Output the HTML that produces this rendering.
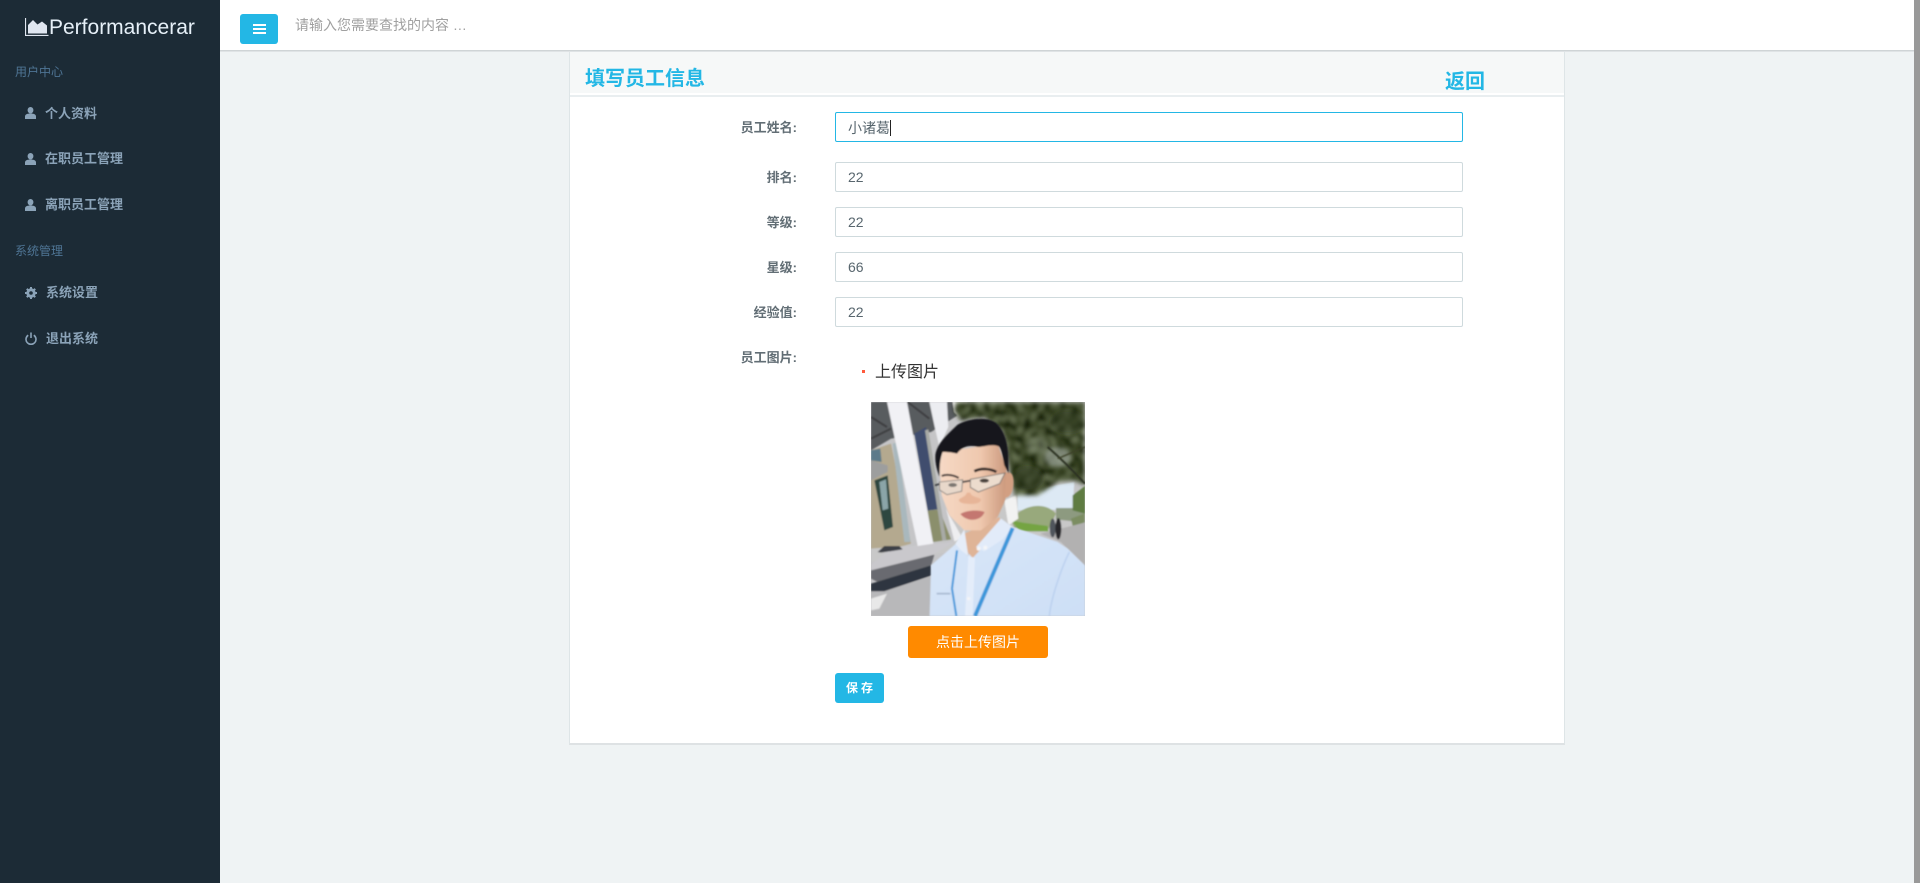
<!DOCTYPE html>
<html lang="zh">
<head>
<meta charset="utf-8">
<title>填写员工信息</title>
<style>
*{box-sizing:border-box;margin:0;padding:0}
html,body{width:1920px;height:883px;overflow:hidden;background:#eff3f4;font-family:"Liberation Sans","Noto Sans CJK SC",sans-serif}
.a{position:absolute;white-space:nowrap}
#side{left:0;top:0;width:220px;height:883px;background:#1c2b36}
#brand{left:49px;top:13px;width:146px;height:30px;line-height:29px;font-size:21px;color:#e6f0f8;overflow:hidden}
.sec{left:15px;font-size:12px;line-height:16px;color:#4f7595}
.it{font-size:13px;line-height:18px;font-weight:700;color:#8ba3b8}
#top{left:220px;top:0;width:1694px;height:51px;background:#fff;border-bottom:1px solid #cfd4d6}
#shadow{left:220px;top:51px;width:1694px;height:1px;background:#dfe3e5}
#menu{left:240px;top:14px;width:38px;height:30px;background:#23b7e5;border-radius:3px}
#menu i{position:absolute;left:13px;width:13px;height:2px;background:#fff}
#ph{left:295px;top:16px;font-size:14px;line-height:18px;color:#a0a0a0}
#card{left:569px;top:52px;width:996px;height:693px;background:#fff;border:1px solid #dee5e7;border-top:0;border-bottom:2px solid #dee2e4}
#band{left:570px;top:52px;width:994px;height:41px;background:#f6f8f8}
#line{left:570px;top:95px;width:994px;height:2px;background:#e9eef0}
.h{font-size:20px;line-height:28px;font-weight:700;color:#23b7e5}
.l{width:200px;left:597px;text-align:right;font-size:13px;line-height:18px;font-weight:700;color:#626e75}
.f{left:835px;width:628px;height:30px;border:1px solid #cfdadd;border-radius:2px;background:#fff;padding-left:12px;font-size:14px;line-height:29px;color:#58666e}
.f.on{border-color:#23b7e5;line-height:30px}
#caret{left:890px;top:120px;width:1px;height:16px;background:#222}
#dot{left:862px;top:370px;width:3px;height:3px;background:#ff5a3c}
#up{left:875px;top:361px;font-size:16px;line-height:23px;color:#333}
#upb{left:908px;top:626px;width:140px;height:32px;background:#ff8a00;border-radius:3px;color:#fff;font-size:14px;line-height:33px;text-align:center}
#save{left:835px;top:673px;width:49px;height:30px;background:#23b7e5;border-radius:3px;color:#fff;font-size:12px;font-weight:700;line-height:30px;text-align:center;letter-spacing:3px;padding-left:3px}
#scroll{left:1914px;top:0;width:6px;height:883px;background:#999}
</style>
</head>
<body>
<div class="a" id="side"></div>
<svg class="a" style="left:25px;top:18px" width="24" height="18" viewBox="0 0 24 18">
<path d="M0.500 0V17.500H23.500" fill="none" stroke="#dfe6f0" stroke-width="1.200"/>
<path d="M3 15.500V7L8 2L12.500 6.500L17 3.500L22 7.500V15.500Z" fill="#dfe6f0"/>
</svg>
<div class="a" id="brand">Performancerar</div>

<div class="a sec" style="top:64px">用户中心</div>
<svg class="a" style="left:25px;top:107px" width="11" height="12" viewBox="0 0 11 12"><ellipse cx="5.500" cy="3.200" rx="2.900" ry="3.200" fill="#8ba3b8"/><path d="M0 12V9.500C0 7.500 2 6.500 5.500 6.500S11 7.500 11 9.500V12Z" fill="#8ba3b8"/></svg>
<div class="a it" style="left:45px;top:105px">个人资料</div>
<svg class="a" style="left:25px;top:153px" width="11" height="12" viewBox="0 0 11 12"><ellipse cx="5.500" cy="3.200" rx="2.900" ry="3.200" fill="#8ba3b8"/><path d="M0 12V9.500C0 7.500 2 6.500 5.500 6.500S11 7.500 11 9.500V12Z" fill="#8ba3b8"/></svg>
<div class="a it" style="left:45px;top:150px">在职员工管理</div>
<svg class="a" style="left:25px;top:199px" width="11" height="12" viewBox="0 0 11 12"><ellipse cx="5.500" cy="3.200" rx="2.900" ry="3.200" fill="#8ba3b8"/><path d="M0 12V9.500C0 7.500 2 6.500 5.500 6.500S11 7.500 11 9.500V12Z" fill="#8ba3b8"/></svg>
<div class="a it" style="left:45px;top:196px">离职员工管理</div>

<div class="a sec" style="top:243px">系统管理</div>
<svg class="a" style="left:25px;top:287px" width="12" height="12" viewBox="0 0 12 12"><circle cx="6" cy="6" r="3.400" fill="none" stroke="#8ba3b8" stroke-width="2.600"/><path d="M6 0V12M0 6H12M1.800 1.800L10.200 10.200M10.200 1.800L1.800 10.200" stroke="#8ba3b8" stroke-width="2"/><circle cx="6" cy="6" r="1.800" fill="#1c2b36"/></svg>
<div class="a it" style="left:46px;top:284px">系统设置</div>
<svg class="a" style="left:25px;top:332px" width="12" height="13" viewBox="0 0 12 13"><path d="M3.200 3.200A5 5 0 1 0 8.800 3.200" fill="none" stroke="#8ba3b8" stroke-width="1.600"/><path d="M6 0.500V6" stroke="#8ba3b8" stroke-width="1.600"/></svg>
<div class="a it" style="left:46px;top:330px">退出系统</div>

<div class="a" id="top"></div>
<div class="a" id="shadow"></div>
<div class="a" id="menu"><i style="top:10px"></i><i style="top:14px"></i><i style="top:18px"></i></div>
<div class="a" id="ph">请输入您需要查找的内容 …</div>

<div class="a" id="card"></div>
<div class="a" id="band"></div>
<div class="a" id="line"></div>
<div class="a h" style="left:585px;top:65px">填写员工信息</div>
<div class="a h" style="left:1445px;top:68px">返回</div>

<div class="a l" style="top:119px">员工姓名:</div>
<div class="a f on" style="top:112px">小诸葛</div>
<div class="a" id="caret"></div>
<div class="a l" style="top:169px">排名:</div>
<div class="a f" style="top:162px">22</div>
<div class="a l" style="top:214px">等级:</div>
<div class="a f" style="top:207px">22</div>
<div class="a l" style="top:259px">星级:</div>
<div class="a f" style="top:252px">66</div>
<div class="a l" style="top:304px">经验值:</div>
<div class="a f" style="top:297px">22</div>
<div class="a l" style="top:349px">员工图片:</div>

<div class="a" id="dot"></div>
<div class="a" id="up">上传图片</div>

<svg class="a" style="left:871px;top:402px" width="214" height="214" viewBox="0 0 642 642">
<defs>
<filter id="b" x="-5%" y="-5%" width="110%" height="110%"><feGaussianBlur stdDeviation="2.500"/></filter>
<filter id="e" x="-5%" y="-5%" width="110%" height="110%"><feGaussianBlur stdDeviation="6"/></filter>
<filter id="fol" x="0" y="0" width="100%" height="100%" color-interpolation-filters="sRGB">
<feTurbulence type="fractalNoise" baseFrequency="0.05" numOctaves="3" seed="7"/>
<feColorMatrix type="matrix" values="0.900 0 0 0 -0.220  0.900 0 0 0 -0.175  0.900 0 0 0 -0.300  0 0 0 0 1"/>
<feGaussianBlur stdDeviation="2"/>
</filter>
<clipPath id="tc"><path d="M255 0H642V250L610 235L560 240L500 280L430 280L415 200L395 90L340 45L270 55L250 25Z"/></clipPath>
<linearGradient id="sh" x1="0" y1="0" x2="1" y2="1"><stop offset="0" stop-color="#d9e6f8"/><stop offset="1" stop-color="#cddff6"/></linearGradient>
<linearGradient id="fc" x1="0" y1="0" x2="1" y2="0"><stop offset="0" stop-color="#f6d9c5"/><stop offset="0.6" stop-color="#efc8ae"/><stop offset="1" stop-color="#c9967a"/></linearGradient>
</defs>
<rect width="642" height="642" fill="#c5c5c7"/>
<g filter="url(#b)">
<path d="M0 0H260V40L180 90L60 110L0 145Z" fill="#585b5e"/>
<path d="M0 45L48 75M0 110L60 80M110 0L175 50" stroke="#3c3e41" stroke-width="6" fill="none"/>
<path d="M0 145L30 135L60 125L120 425L85 435L0 440Z" fill="#b4a98f"/>
<path d="M0 145L28 140L32 180L0 175Z" fill="#5c7a8a"/>
<path d="M65 125L80 120L118 420L100 420Z" fill="#a9b8bd"/>
<path d="M0 175L50 190L50 210L0 235Z" fill="#9d9e9e"/>
<path d="M10 235L50 220L66 375L40 385Z" fill="#2d4640"/>
<path d="M25 240L45 232L52 320L35 325Z" fill="#8ba5a8"/>
<path d="M130 95L165 75L200 322L170 326Z" fill="#3f4e6e"/>
<path d="M170 326L205 322L240 412L185 420Z" fill="#8b8f6c"/>
<path d="M0 440L130 430L250 420V280L642 280V365L510 400L400 430L0 480Z" fill="#c8c8c8"/>
<path d="M440 270L610 240L605 322L440 325Z" fill="#dde9f4"/>
<path d="M555 318H642V362L555 352Z" fill="#8d9a80"/>
<path d="M605 280L642 252V335L605 325Z" fill="#5f7b42"/>
<path d="M420 355C450 310 520 295 555 335L532 382L430 378Z" fill="#98a97b"/>
<path d="M422 355L455 362L530 372L532 388L445 388Z" fill="#75a443"/>
<path d="M600 350L640 335V362L605 372Z" fill="#7c8d62"/>
<path d="M508 395L642 362V495L570 420Z" fill="#b2b1b1"/>
<path d="M0 488L60 438L250 420L190 456L0 512Z" fill="#c9c8cc"/>
<path d="M0 505L190 458L180 492L20 540L0 530Z" fill="#696b6f"/>
<path d="M0 545L180 490L183 520L40 568L0 568Z" fill="#2e3640"/>
<path d="M0 568L40 568L183 522L176 642H0Z" fill="#b8b8ba"/>
<path d="M0 590L48 575L25 620L0 625Z" fill="#e8e8e8"/>
<path d="M20 450L40 432L85 432L95 442L30 452Z" fill="#3c4046"/>
<path d="M48 0H108L187 425L140 432Z" fill="#f1f1f5"/>
<path d="M175 0H228L232 75L205 135L190 70Z" fill="#ecedf1"/>
<path d="M225 320L275 410L250 418Z" fill="#eeeef0"/>
<path d="M162 85L172 82L226 415L214 416Z" fill="#a8aaa6"/>
<path d="M245 0H290L270 50L250 30Z" fill="#f3f3f3"/>
<path d="M400 295L435 280L442 350L412 370Z" fill="#f2f2f2"/>
<ellipse cx="545" cy="378" rx="9" ry="28" fill="#50545c"/>
<ellipse cx="562" cy="380" rx="9" ry="32" fill="#25272c"/>
</g>
<g filter="url(#e)"><g clip-path="url(#tc)"><rect width="642" height="290" filter="url(#fol)"/></g></g>
<g filter="url(#e)">
<ellipse cx="590" cy="60" rx="50" ry="35" fill="#2e3a22" fill-opacity=".55"/>
<ellipse cx="470" cy="230" rx="45" ry="35" fill="#2c3620" fill-opacity=".6"/>
<ellipse cx="560" cy="165" rx="40" ry="30" fill="#aeb6ae" fill-opacity=".6"/>
<ellipse cx="500" cy="130" rx="35" ry="25" fill="#8b957d" fill-opacity=".5"/>
</g>
<g filter="url(#b)">
<path d="M530 135C570 170 610 210 642 245" stroke="#2c3020" stroke-width="6" fill="none"/>
<path d="M560 170L642 135" stroke="#3a3f28" stroke-width="4" fill="none"/>
<path d="M176 642L180 490L255 425L290 462L390 350L425 375L560 420L590 440L642 490V642Z" fill="url(#sh)"/>
<path d="M270 400L385 345L395 372L305 468L285 445Z" fill="#dfb497"/>
<path d="M253 425L280 382L292 462L270 445Z" fill="#e6edf8"/>
<path d="M390 350L425 375L395 412L340 448L315 435Z" fill="#e2ebf9"/>
<path d="M292 462L312 468L305 642H282Z" fill="#e4edfa"/>
<path d="M425 378L312 642" stroke="#3d97da" stroke-width="12" fill="none"/>
<path d="M258 445L243 560L256 642" stroke="#3d97da" stroke-width="6" fill="none"/>
<circle cx="323" cy="440" r="6" fill="#f4f5f8"/><circle cx="343" cy="437" r="6" fill="#f4f5f8"/><circle cx="293" cy="590" r="5" fill="#f4f5f8"/>
<path d="M535 642C540 590 570 500 595 450" stroke="#b9cfee" stroke-width="4" fill="none"/>
<path d="M197 575H238" stroke="#a6b7d0" stroke-width="5"/>
<path d="M205 190L215 150L380 125L405 200L410 240L405 285L398 305L380 345L330 385L280 385L235 340L212 280Z" fill="url(#fc)"/>
<path d="M405 212C425 205 432 230 425 262C420 282 408 290 400 285Z" fill="#d29f82"/>
<path d="M193 160C198 130 215 110 260 68C290 50 345 42 375 62C400 85 410 120 412 160L413 215L400 190C395 165 392 140 383 133C360 125 340 135 322 135C295 128 275 132 258 155C240 150 225 150 215 150C208 165 205 195 206 225C198 205 192 185 193 160Z" fill="#14161c"/>
<path d="M212 222C228 215 250 220 263 228" stroke="#3b3030" stroke-width="6" fill="none"/>
<path d="M310 208C330 197 360 200 376 210" stroke="#2f2828" stroke-width="8" fill="none"/>
<path d="M205 240L275 233L272 268L228 278L206 264Z" fill="#e8d8ca" stroke="#7c7a78" stroke-width="2.500"/>
<path d="M298 232L402 213L386 245L322 270L298 256Z" fill="#ecdccd" stroke="#6e6c6a" stroke-width="2.500"/>
<path d="M275 240L298 236M192 250L206 246" stroke="#33353a" stroke-width="5"/>
<ellipse cx="245" cy="249" rx="13" ry="6" fill="#7a7671"/>
<ellipse cx="340" cy="236" rx="14" ry="6" fill="#4a423d"/>
<path d="M298 272C300 285 322 285 330 292C330 305 305 308 285 305C270 304 262 298 264 292C275 285 285 282 288 272Z" fill="#e7b598"/>
<path d="M268 336C285 325 322 322 341 330C330 358 290 362 268 336Z" fill="#c4776f"/>
</g>
</svg>

<div class="a" id="upb">点击上传图片</div>
<div class="a" id="save">保存</div>
<div class="a" id="scroll"></div>
</body>
</html>
